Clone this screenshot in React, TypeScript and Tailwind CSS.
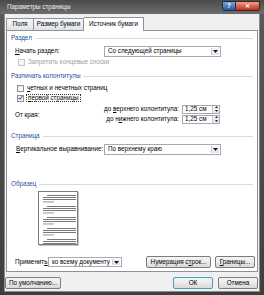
import React from "react";

function Header({ text }: { text: string }) {
  return (
    <div className="flex items-center h-[10px] pl-[4px] pr-[4px]">
      <span className="text-[#1c4fa0] leading-none whitespace-nowrap">{text}</span>
      <div className="flex-1 ml-[3px] h-px bg-[#d5dbe6]" />
    </div>
  );
}

function Arrow() {
  return (
    <div className="w-[8px] h-full flex items-center justify-center bg-gradient-to-b from-[#f3f6fa] to-[#dde5ee] border-l border-[#c5ccd6]">
      <svg width="5" height="3" viewBox="0 0 5 3">
        <path d="M0 0 L5 0 L2.5 3 Z" fill="#1a1a1a" />
      </svg>
    </div>
  );
}

function Select({ text, w, h = 11 }: { text: string; w: string; h?: number }) {
  return (
    <div
      className={`${w} flex items-stretch bg-white border border-[#a6a9b0]`}
      style={{ height: h }}
    >
      <div className="flex-1 flex items-center pl-[3px] whitespace-nowrap overflow-hidden leading-none">{text}</div>
      <div className="p-[1px] flex">
        <Arrow />
      </div>
    </div>
  );
}

function Check({ checked, disabled }: { checked?: boolean; disabled?: boolean }) {
  return (
    <div
      className={`w-[7px] h-[7px] border flex items-center justify-center ${
        disabled ? "border-[#c9c9c9] bg-[#f4f4f4]" : "border-[#8a8f99] bg-gradient-to-br from-[#e6e8ec] to-[#ffffff]"
      }`}
    >
      {checked && (
        <svg width="6" height="6" viewBox="0 0 6 6">
          <path d="M0.8 3 L2.3 4.6 L5.3 0.8" stroke="#1d3f7a" strokeWidth="1.2" fill="none" />
        </svg>
      )}
    </div>
  );
}

function Spin({ text }: { text: string }) {
  return (
    <div className="w-[38px] h-[9px] flex bg-white border border-[#a6a9b0]">
      <div className="flex-1 flex items-center pl-[2px] leading-none whitespace-nowrap">{text}</div>
      <div className="w-[7px] flex flex-col bg-gradient-to-b from-[#f3f6fa] to-[#dde5ee] border-l border-[#c5ccd6]">
        <div className="flex-1 flex items-center justify-center">
          <svg width="3" height="2" viewBox="0 0 3 2"><path d="M0 2 L3 2 L1.5 0 Z" fill="#222" /></svg>
        </div>
        <div className="flex-1 flex items-center justify-center">
          <svg width="3" height="2" viewBox="0 0 3 2"><path d="M0 0 L3 0 L1.5 2 Z" fill="#222" /></svg>
        </div>
      </div>
    </div>
  );
}

function Btn({ text, w, focus }: { text: React.ReactNode; w: string; focus?: boolean }) {
  return (
    <div
      className={`${w} h-[12px] flex items-center justify-center rounded-[2px] border leading-none whitespace-nowrap bg-gradient-to-b from-[#f4f4f4] via-[#ebebeb] to-[#d9d9d9] ${
        focus ? "border-[#3ea3b8]" : "border-[#7d7d7d]"
      }`}
    >
      {text}
    </div>
  );
}

function Preview() {
  const groups = [3, 14, 25, 36, 47];
  const lines: React.ReactElement[] = [];
  groups.forEach((y, gi) => {
    lines.push(<rect key={gi + "a"} x={8} y={y} width={29} height={0.9} fill="#6a6a6a" />);
    lines.push(<rect key={gi + "b"} x={4} y={y + 2} width={33} height={0.9} fill="#6a6a6a" />);
    lines.push(<rect key={gi + "c"} x={4} y={y + 4} width={33} height={0.9} fill="#6a6a6a" />);
    if (gi < 4) lines.push(<rect key={gi + "d"} x={4} y={y + 6.5} width={11} height={0.9} fill="#8a8a8a" />);
  });
  return (
    <div className="ml-[31px] mt-[2px] w-[40px] h-[54px] bg-white border border-[#7a7a7a] shadow-[1px_1px_0_#c8c8c8]">
      <svg width="38" height="52" viewBox="0 0 38 52">
        {lines}
      </svg>
    </div>
  );
}

export default function App() {
  return (
    <div
      className="w-[264px] h-[295px] flex flex-col bg-gradient-to-b from-[#5a5a5a] to-[#3e3e3e] text-[6.3px] text-black overflow-hidden"
      style={{ fontFamily: '"Liberation Sans", Arial, sans-serif' }}
    >
      {/* title bar */}
      <div className="h-[14px] flex items-start bg-gradient-to-b from-[#4a4a4a] to-[#6e6e6e]">
        <span className="ml-[7px] mt-[4px] text-[#efefef] leading-none whitespace-nowrap">Параметры страницы</span>
        <div className="ml-auto mr-[4px] mt-[1px] flex h-[10px]">
          <div className="w-[14px] flex items-center justify-center rounded-bl-[3px] border border-[#1f2e44] bg-gradient-to-b from-[#7aa6d8] via-[#4a7fbf] to-[#2b5c9a] text-white font-bold leading-none">
            ?
          </div>
          <div className="w-[24px] flex items-center justify-center rounded-br-[3px] border border-l-0 border-[#4a1c16] bg-gradient-to-b from-[#eea08e] via-[#d9634d] to-[#b83520] text-white font-bold leading-none">
            ✕
          </div>
        </div>
      </div>

      {/* client */}
      <div className="flex-1 mx-[4px] mb-[3px] bg-[#f0f0f0] flex flex-col border border-[#8c8c8c] border-t-0">
        {/* tabs */}
        <div className="h-[16px] flex items-end pl-[1px]">
          <div className="w-[28px] h-[12px] flex items-center justify-center border border-b-0 border-[#8d929b] bg-gradient-to-b from-[#f6f7f9] to-[#dfe3e9] leading-none">
            Поля
          </div>
          <div className="w-[50px] h-[12px] flex items-center justify-center border border-b-0 border-l-0 border-[#8d929b] bg-gradient-to-b from-[#f6f7f9] to-[#dfe3e9] leading-none whitespace-nowrap">
            Размер бумаги
          </div>
          <div className="w-[60px] h-[14px] -mb-px relative z-10 flex items-center justify-center border border-b-0 border-l-0 border-[#8d929b] bg-white leading-none whitespace-nowrap">
            Источник бумаги
          </div>
        </div>

        {/* panel */}
        <div className="mx-[1px] h-[242px] bg-white border border-[#8d929b] flex flex-col pt-[2px]">
          <Header text="Раздел" />
          <div className="mt-[3px] h-[11px] flex items-center pl-[8px]">
            <span className="w-[89px] whitespace-nowrap leading-none">
              <u>Н</u>ачать раздел:
            </span>
            <Select text="Со следующей страницы" w="w-[117px]" />
          </div>
          <div className="h-[10px] flex items-center pl-[11px] text-[#a0a0a0]">
            <Check disabled />
            <span className="ml-[3px] leading-none whitespace-nowrap">Запретить концевые сноски</span>
          </div>
          <div className="mt-[4px]">
            <Header text="Различать колонтитулы" />
          </div>
          <div className="mt-[2px] h-[10px] flex items-center pl-[10px]">
            <Check />
            <span className="ml-[3px] leading-none whitespace-nowrap">
              <u>ч</u>етных и нечетных страниц
            </span>
          </div>
          <div className="h-[10px] flex items-center pl-[10px]">
            <Check checked />
            <span className="ml-[2px] px-[1px] border border-dotted border-[#333] leading-none whitespace-nowrap">
              <u>п</u>ервой страницы
            </span>
          </div>
          <div className="mt-[1px] h-[20px] flex items-center">
            <span className="pl-[8px] w-[97px] leading-none whitespace-nowrap mt-[3px]">От края:</span>
            <div className="flex flex-col gap-[1px]">
              <div className="h-[9px] flex items-center">
                <span className="w-[78px] text-right pr-[3px] leading-none whitespace-nowrap">
                  до <u>в</u>ерхнего колонтитула:
                </span>
                <Spin text="1,25 см" />
              </div>
              <div className="h-[9px] flex items-center">
                <span className="w-[78px] text-right pr-[3px] leading-none whitespace-nowrap">
                  до н<u>и</u>жнего колонтитула:
                </span>
                <Spin text="1,25 см" />
              </div>
            </div>
          </div>
          <div className="mt-[7px]">
            <Header text="Страница" />
          </div>
          <div className="mt-[3px] h-[11px] flex items-center pl-[9px]">
            <span className="w-[88px] whitespace-nowrap leading-none">
              <u>В</u>ертикальное выравнивание:
            </span>
            <Select text="По верхнему краю" w="w-[117px]" />
          </div>
          <div className="mt-[24px]">
            <Header text="Образец" />
          </div>
          <Preview />
          <div className="mt-[11px] h-[12px] flex items-center pl-[8px]">
            <span className="w-[33px] whitespace-nowrap leading-none">
              Применит<u>ь</u>:
            </span>
            <Select text="ко всему документу" w="w-[74px]" h={10} />
            <div className="ml-[24px]">
              <Btn text={<span>Нумерация с<u>т</u>рок...</span>} w="w-[65px]" />
            </div>
            <div className="ml-[4px]">
              <Btn text={<span><u>Г</u>раницы...</span>} w="w-[40px]" />
            </div>
          </div>
        </div>

        {/* bottom buttons */}
        <div className="mt-[5px] flex items-center">
          <Btn text="По умолчанию..." w="w-[56px]" />
          <div className="ml-auto flex gap-[5px] mr-[1px]">
            <Btn text="ОК" w="w-[40px]" focus />
            <Btn text="Отмена" w="w-[40px]" />
          </div>
        </div>
      </div>
    </div>
  );
}
